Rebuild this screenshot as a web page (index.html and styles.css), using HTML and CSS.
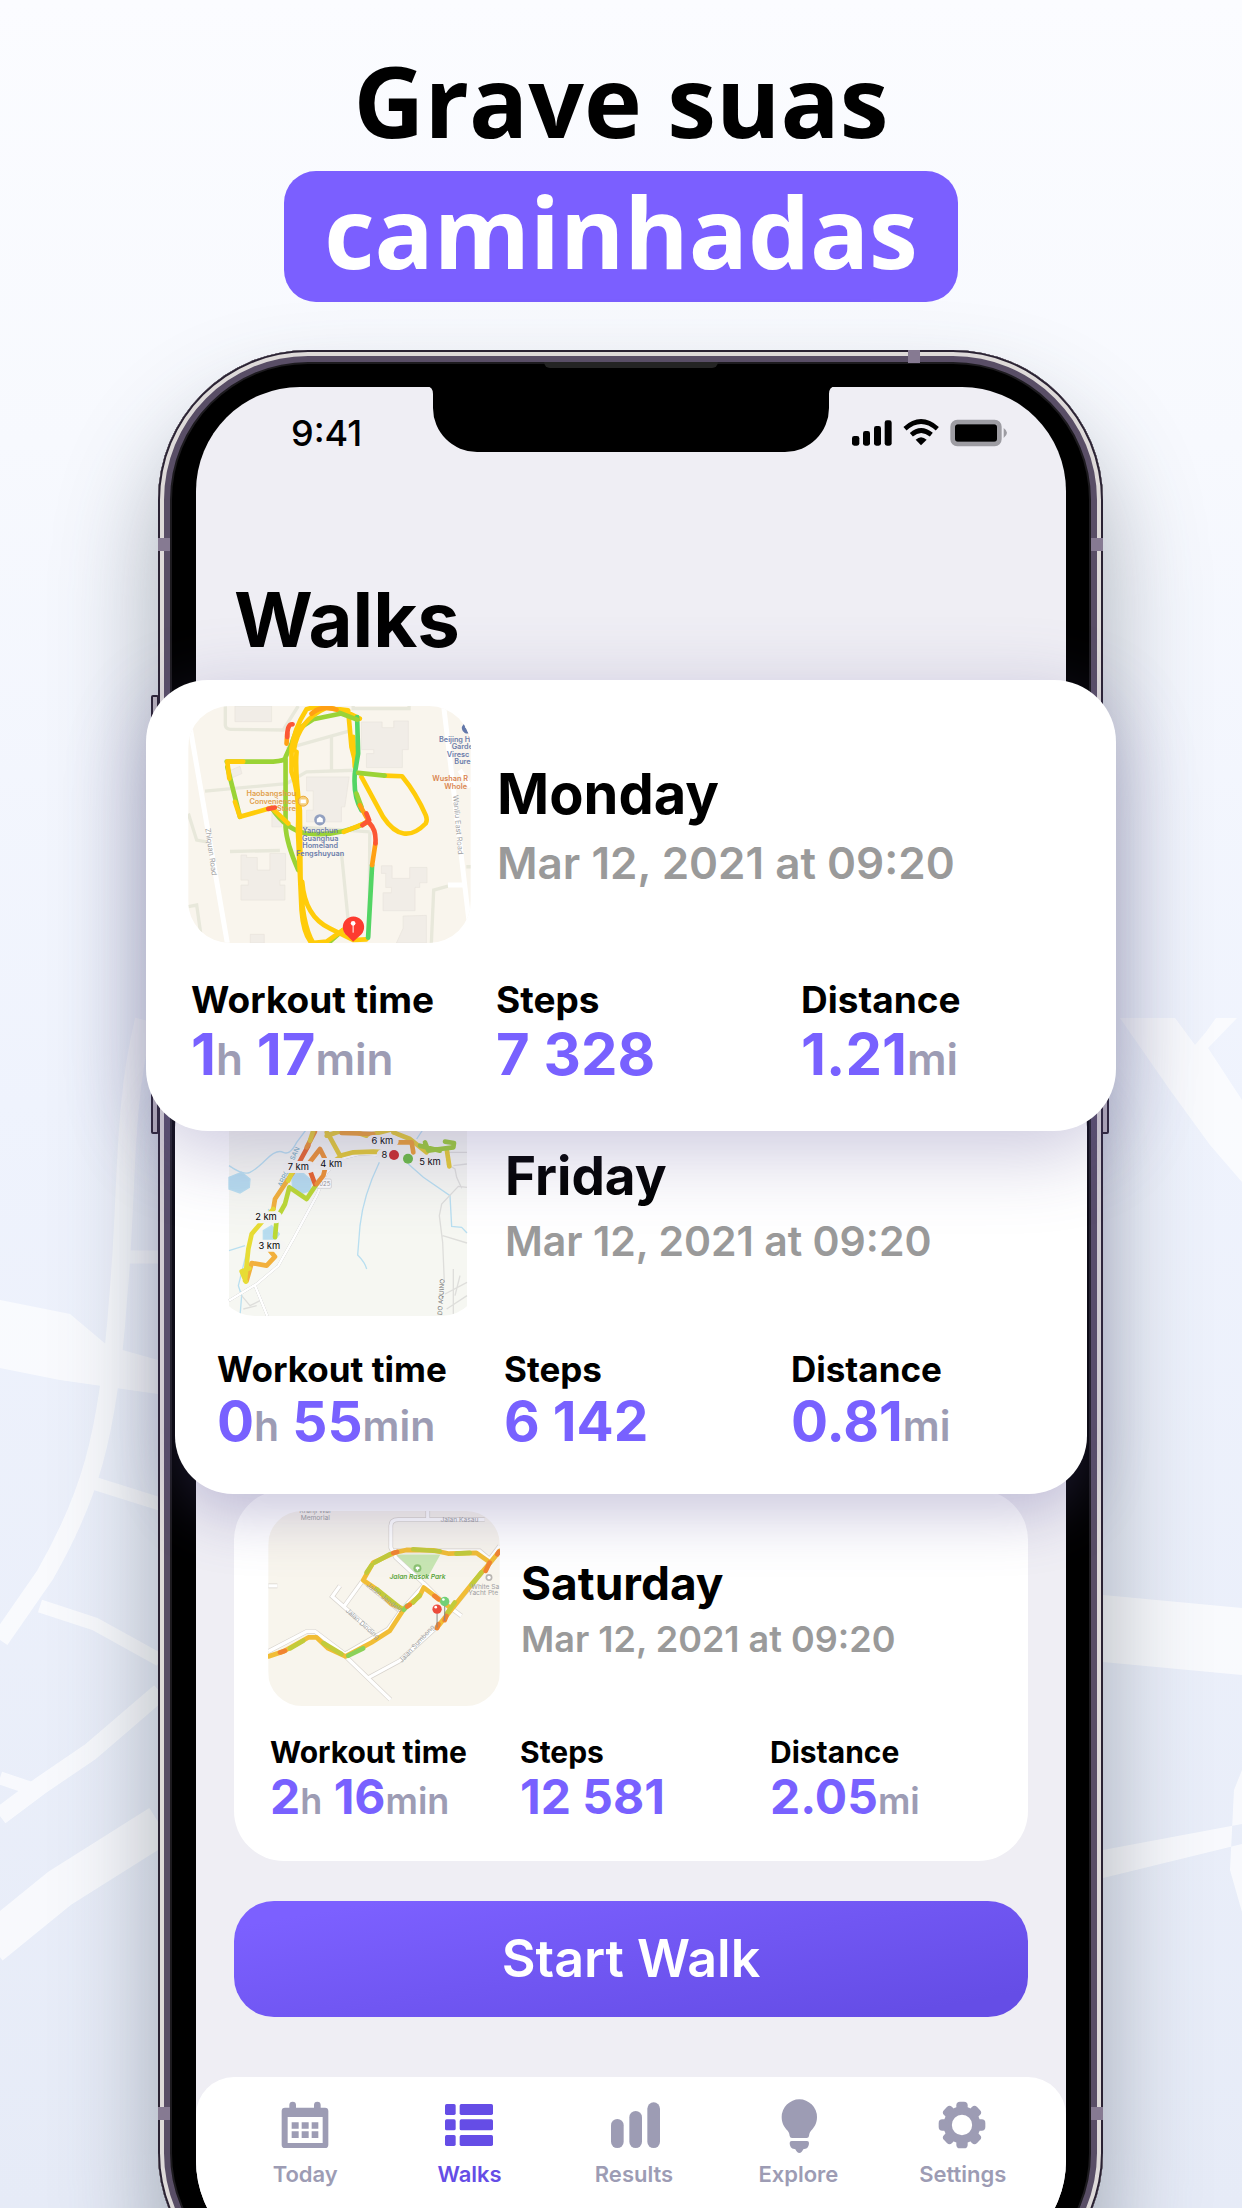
FILE: index.html
```html
<!DOCTYPE html>
<html lang="pt">
<head>
    <meta charset="UTF-8">
    <meta name="viewport" content="width=device-width, initial-scale=1">
    <title>Grave suas caminhadas</title>
    <link rel="stylesheet" href="styles.css">
</head>
<body>
<svg class="roads" viewBox="0 0 1242 2208" preserveAspectRatio="none" aria-hidden="true">
    <path class="fill" d="M0 1300L70 1314 108 1346 158 1360V1394L60 1380 0 1368zM1120 1018H1175L1195 1045 1206 1032 1216 1018H1237L1208 1048 1242 1100V1182L1210 1145 1170 1090zM1103 1595L1242 1608V1675L1103 1662zM1103 1850L1242 1824V1844L1103 1878zM1242 1770L1234 1790 1230 1870 1242 1912z"/>
    <path d="M144 1020C122 1110 128 1190 118 1300 108 1440 88 1500 45 1575L0 1640" stroke-width="18"/>
    <path d="M120 1257H160M90 1482L160 1504M40 1606L95 1624 160 1660M0 1778L30 1788" stroke-width="13"/>
    <path d="M0 1816L40 1786 90 1752 160 1692" stroke-width="18"/>
    <path d="M-10 1945L60 1888 160 1825" stroke-width="40"/>
</svg>

<header class="headline">
    <h1>Grave suas <span>caminhadas</span></h1>
</header>

<main class="stage">
    <div class="phone">
        <i class="key key-l1"></i>
        <i class="key key-l2"></i>
        <i class="key key-r"></i>
        <i class="band band-top"></i>
        <i class="band band-l"></i>
        <i class="band band-r"></i>
        <i class="band band-l low"></i>
        <i class="band band-r low"></i>
        <i class="speaker"></i>
        <div class="screen">
            <svg class="notch" viewBox="0 0 408 66" aria-hidden="true">
                <path d="M0 0Q6 1 6 8V22A44 44 0 0 0 50 66H358A44 44 0 0 0 402 22V8Q402 1 408 0z"/>
            </svg>
            <div class="status">
                <span>9:41</span>
                <svg class="status-icons" viewBox="636 264 465 84" aria-hidden="true">
                    <rect x="636" y="315" width="22" height="29" rx="7"/>
                    <rect x="669" y="300" width="21" height="44" rx="7"/>
                    <rect x="702" y="285" width="21" height="59" rx="7"/>
                    <rect x="734" y="268" width="21" height="76" rx="7"/>
                    <path d="M843 343L827 326Q843 311 860 326z"/>
                    <path class="wave" d="M795 293Q843 250 892 293M814 311Q843 286 874 311"/>
                    <rect class="shell" x="938" y="273" width="140" height="66" rx="14"/>
                    <rect x="945" y="280" width="126" height="52" rx="8"/>
                    <path class="nub" d="M1091 291Q1111 305 1091 321z"/>
                </svg>
            </div>
            <h2 class="title">Walks</h2>

            <article class="card card-lg">
                <div class="head">
                    <div class="map">
                        <svg viewBox="145 107 848 712" role="img" aria-label="Monday route">
                            <rect class="land" x="145" y="107" width="848" height="712"/>
                            <g class="lane">
                                <path d="M256 107V165Q258 177 272 177L430 179 475 107M440 235L630 182M575 195V305M195 363L440 340 500 305 645 300M640 107V115H808V107M270 544L420 541M605 550L625 750M690 485L688 800M470 470L690 485M145 430L170 510 200 515M145 710L170 705 182 790M875 819L882 660 925 648M980 590H993"/>
                            </g>
                            <g class="block">
                                <path d="M285 107H395V154H285zM665 155H727V172H762V152H806V238H788V250H788V292H680V250H702V238H665zM500 320H628L615 410H605V455H500V420H520V362H500zM303 555H320V562H352V600H390V550H437V630H420V645H435V690H303V645H325V630H303zM725 587H757V625H810V592H862V638H840V652H826V722H730V668H755V652H738V610H725zM790 738L860 736V819H770L790 775zM331 793H373V819H331zM272 300L300 288 306 310 278 322zM396 430H425V470H396z"/>
                            </g>
                            <g class="street">
                                <path d="M150 170L262 819M912 107L990 770M960 300L993 350M925 645H970"/>
                            </g>
                            <g class="label">
                                <text transform="translate(196 475) rotate(82)" font-size="22">Zhiquan Road</text>
                                <text transform="translate(940 375) rotate(85)" font-size="22">Wanliu East Road</text>
                            </g>
                            <g class="route">
                                <path stroke="#9ad336" d="M260 274H400Q437 272 437 260L455 220 470 180 520 147 612 128M437 265V470Q440 520 475 600M262 290L300 440M395 413Q440 480 500 490 600 500 685 455M610 780L570 815"/>
                                <path stroke="#ffcc0a" d="M310 274H262L268 325M285 395L300 440 395 413 445 460M612 485L685 455M455 240Q460 180 500 117L540 105 620 125 660 145M462 240Q475 150 560 112L625 120 635 230 645 270M455 230V305Q480 370 474 480L485 720Q490 790 515 819L560 815 610 780M470 245Q465 300 480 420L482 620Q485 760 520 819M487 635Q495 740 570 775L640 810 680 808M665 320L730 440Q790 530 858 460 864 450 858 435 830 370 787 318L735 316M640 200L645 290"/>
                                <path stroke="#53d564" d="M652 140L655 250 645 310Q640 380 665 420M697 585L685 803"/>
                                <path stroke="#9ad336" d="M600 128L652 148M655 308L735 316M650 370L665 410"/>
                                <path stroke="#ffa014" d="M660 405L685 450M707 520L697 585M515 130Q545 103 590 118M440 220L442 190"/>
                                <path stroke="#fc5735" d="M442 200Q442 160 458 162M680 430L688 450 668 465M690 460Q710 480 707 520M385 416L405 412"/>
                            </g>
                            <g class="place" text-anchor="middle" font-size="22">
                                <circle cx="540" cy="449" r="17" fill="#92a0c0"/>
                                <path d="M531 456V446L540 439 549 446V456z" fill="#fff"/>
                                <text x="541" y="490">Yangchun</text>
                                <text x="541" y="513">Guanghua</text>
                                <text x="541" y="535">Homeland</text>
                                <text x="541" y="558">Fengshuyuan</text>
                            </g>
                            <g class="shop" text-anchor="end" font-size="22">
                                <circle cx="490" cy="393" r="15" fill="#f5cf7e" stroke="#e9a734" stroke-width="3"/>
                                <path d="M482 388H498V399H482z" fill="#fff"/>
                                <text x="468" y="378">Haobangshou</text>
                                <text x="468" y="402">Convenience</text>
                                <text x="468" y="423">Store</text>
                            </g>
                            <g class="place" font-size="22">
                                <path d="M985 158A16 16 0 1 0 990 188L984 184 982 174 976 172z" fill="#6378aa"/>
                                <text x="898" y="215">Beijing H</text>
                                <text x="936" y="237">Garde</text>
                                <text x="921" y="260">Viresc</text>
                                <text x="944" y="282">Bure</text>
                            </g>
                            <g class="shop dark" font-size="22">
                                <text x="878" y="333">Wushan R</text>
                                <text x="914" y="355">Whole</text>
                            </g>
                            <path d="M640 815L622 797A32 32 0 1 1 660 797z" fill="#fd3b30"/>
                            <circle cx="640" cy="760" r="7" fill="#fff"/>
                            <path d="M640 760V788" stroke="#fff" stroke-width="3"/>
                        </svg>
                    </div>
                    <div class="when">
                        <h3>Monday</h3>
                        <time datetime="2021-03-12T09:20">Mar 12, 2021 at 09:20</time>
                    </div>
                </div>
                <dl class="stats">
                    <div><dt>Workout time</dt><dd>1<small>h</small> 17<small>min</small></dd></div>
                    <div><dt>Steps</dt><dd>7 328</dd></div>
                    <div><dt>Distance</dt><dd>1.21<small>mi</small></dd></div>
                </dl>
            </article>

            <article class="card card-md">
                <div class="head">
                    <div class="map">
                        <svg viewBox="207 -48 714 669" role="img" aria-label="Friday route">
                            <rect x="207" y="-48" width="714" height="669" fill="#f6f7f2"/>
                            <g class="water">
                                <path d="M207 170Q250 200 270 190T320 150 370 130 410 100L440 60M207 425L255 410M325 300L350 350M240 621L245 560 235 530 250 470 260 430M658 160Q610 260 600 350L593 438Q615 460 620 480M745 165L790 205 870 260 875 352 905 355 921 372M770 90L790 60"/>
                                <path class="pond" d="M207 205L245 190 270 210 268 235 240 252 207 240zM395 200L425 188 455 215 450 245 420 255 398 240zM310 365L335 350 358 375 340 400H310z"/>
                            </g>
                            <g class="lane thin">
                                <path d="M921 235L895 232 845 285 838 320 848 400 853 520M848 380L921 402M860 165L885 180 890 205 905 238M880 480V621M855 555L921 520M860 600L921 560M900 500L885 560M245 560L270 590 300 575M250 600L290 590M860 130H921M880 170L921 165"/>
                            </g>
                            <g class="street narrow">
                                <path d="M207 575L290 525 355 470 400 390 470 260 500 190 540 150 600 135 700 140M285 530L322 621"/>
                            </g>
                            <rect x="470" y="210" width="44" height="28" rx="4" fill="#fff" stroke="#ccc" stroke-width="2"/>
                            <text x="478" y="231" font-size="18" fill="#999">025</text>
                            <text transform="translate(365 235) rotate(-65)" font-size="20" fill="#6da6bd">ARROYO SAN</text>
                            <text transform="translate(846 619) rotate(-86)" font-size="19" fill="#777">DO AQUINO</text>
                            <g class="route slim">
                                <path stroke="#f2b03c" d="M260 515L275 462 320 470 345 443 330 425M340 300L345 270 385 210 410 175"/>
                                <path stroke="#e7dc35" d="M258 518L245 487 268 478M255 515L265 420 275 375 305 340 340 300M385 215L400 180"/>
                                <path stroke="#bcd936" d="M345 385L350 330 375 285 388 235 440 270 470 225"/>
                                <path stroke="#e9662f" d="M415 165L445 110M465 225L450 185"/>
                                <path stroke="#ef9334" d="M440 115L465 68M445 165L480 120 500 160 490 200 470 225"/>
                                <path stroke="#e7cd35" d="M450 95L468 40M500 70L510 85 540 140 580 130 640 128 690 130M500 80L560 60 620 80 700 60M700 70L750 90 800 130M860 120L868 172M500 170L540 145"/>
                                <path stroke="#efa133" d="M545 72L640 75M700 100L755 100 760 130"/>
                                <path stroke="#9fce38" d="M795 100L805 125 840 120 880 115 882 102 855 98M780 110L840 125"/>
                            </g>
                            <g class="tag" text-anchor="middle" font-size="28">
                                <rect x="367" y="156" width="98" height="36" rx="18"/><text x="415" y="184">7 km</text>
                                <rect x="467" y="147" width="95" height="36" rx="18"/><text x="514" y="175">4 km</text>
                                <rect x="620" y="78" width="96" height="36" rx="18"/><text x="667" y="106">6 km</text>
                                <rect x="650" y="120" width="80" height="34" rx="17"/><text x="673" y="147">8</text>
                                <rect x="764" y="139" width="94" height="36" rx="18"/><text x="810" y="167">5 km</text>
                                <rect x="269" y="307" width="98" height="36" rx="18"/><text x="318" y="334">2 km</text>
                                <rect x="281" y="392" width="97" height="36" rx="18"/><text x="328" y="419">3 km</text>
                            </g>
                            <circle cx="702" cy="138" r="15" fill="#ce2d2b"/>
                            <circle cx="744" cy="149" r="15" fill="#6dbd44"/>
                        </svg>
                    </div>
                    <div class="when">
                        <h3>Friday</h3>
                        <time datetime="2021-03-12T09:20">Mar 12, 2021 at 09:20</time>
                    </div>
                </div>
                <dl class="stats">
                    <div><dt>Workout time</dt><dd>0<small>h</small> 55<small>min</small></dd></div>
                    <div><dt>Steps</dt><dd>6 142</dd></div>
                    <div><dt>Distance</dt><dd>0.81<small>mi</small></dd></div>
                </dl>
            </article>

            <article class="card card-sm">
                <div class="head">
                    <div class="map">
                        <svg viewBox="205 95 695 586" role="img" aria-label="Saturday route">
                            <rect x="205" y="95" width="695" height="586" fill="#f8f5ed"/>
                            <path d="M588 226H722L685 292 640 285z" fill="#c8e6b3"/>
                            <g class="road-edge">
                                <path d="M684 95V122M855 121H595Q573 121 573 140V205L588 235 680 320M580 215H840L870 240 900 200M205 517L320 457H345L435 525 565 450 600 400 675 315 735 375M435 530L572 662M502 598L600 545 715 440 900 215M488 305L430 385M420 320L397 352 520 460M745 380L785 410M205 320H232M490 305L600 395"/>
                            </g>
                            <g class="road">
                                <path d="M684 95V122M855 121H595Q573 121 573 140V205L588 235 680 320M580 215H840L870 240 900 200M205 517L320 457H345L435 525 565 450 600 400 675 315 735 375M435 530L572 662M502 598L600 545 715 440 900 215M488 305L430 385M420 320L397 352 520 460M745 380L785 410M205 320H232M490 305L600 395"/>
                            </g>
                            <g class="route">
                                <path stroke="#f1bd36" d="M205 532L250 517 325 475H350L385 508 437 532 515 490 570 455 612 390 575 375 530 330 490 303 520 250 585 220 620 212 700 213 745 223 830 221 872 250 900 215M612 390L660 350 672 325 712 355 750 385M872 250L820 310 712 445"/>
                                <path stroke="#c2cb3b" d="M270 508L310 485M370 492L425 525M525 250L570 225M640 210L720 216M770 223L810 221M530 330L600 385M845 280L815 318M500 280L515 258M740 405L765 370M640 370L660 348"/>
                                <path stroke="#8bd159" d="M445 530L490 508M612 392L622 380"/>
                                <path stroke="#f18432" d="M712 447L716 435M870 250L858 275M893 225L898 217M622 382L630 377M704 350L716 360M735 423L740 410M580 221L592 218M240 520L255 515"/>
                            </g>
                            <g class="label" font-size="20">
                                <text x="298" y="101">Kranji War</text>
                                <text x="302" y="122">Memorial</text>
                                <text x="722" y="129">Jalan Kasau</text>
                                <text x="815" y="328">White Sa</text>
                                <text x="806" y="348">Yacht Pte</text>
                                <text transform="translate(498 320) rotate(38)">Jalan Jendela</text>
                                <text transform="translate(436 396) rotate(42)">Jalan Dinding</text>
                                <text transform="translate(606 552) rotate(-47)">Jalan Sumbong</text>
                            </g>
                            <text class="park" x="569" y="300" font-size="20">Jalan Rasok Park</text>
                            <circle cx="653" cy="267" r="12" fill="#8bc272"/>
                            <path d="M647 268A6 6 0 1 1 660 268L655 270V274H651V270z" fill="#fff"/>
                            <circle cx="868" cy="295" r="8" fill="#fff" stroke="#b9b6b2" stroke-width="5"/>
                            <path d="M712 400V445M735 375V425" stroke="#888" stroke-width="3"/>
                            <circle cx="712" cy="390" r="14" fill="#ec4b3c"/>
                            <circle cx="735" cy="367" r="14" fill="#72d077"/>
                            <circle cx="708" cy="384" r="4" fill="#fff"/>
                            <circle cx="731" cy="361" r="4" fill="#fff"/>
                        </svg>
                    </div>
                    <div class="when">
                        <h3>Saturday</h3>
                        <time datetime="2021-03-12T09:20">Mar 12, 2021 at 09:20</time>
                    </div>
                </div>
                <dl class="stats">
                    <div><dt>Workout time</dt><dd>2<small>h</small> 16<small>min</small></dd></div>
                    <div><dt>Steps</dt><dd>12 581</dd></div>
                    <div><dt>Distance</dt><dd>2.05<small>mi</small></dd></div>
                </dl>
            </article>

            <button class="start" type="button">Start Walk</button>

            <nav class="tabs">
                <a href="#today">
                    <svg viewBox="292 120 168 162" aria-hidden="true">
                        <path fill-rule="evenodd" d="M329 146V138A10 10 0 0 1 349 138V146H403V138A10 10 0 0 1 423 138V146H436Q446 146 446 156V257Q446 267 436 267H316Q306 267 306 257V156Q306 146 316 146zM324 174V252H429V174z"/>
                        <path d="M336 190H357V209H336zM366 190H387V209H366zM396 190H416V209H396zM336 217H357V237H336zM366 217H387V237H366zM396 217H416V237H396z"/>
                    </svg>
                    Today
                </a>
                <a class="active" href="#walks">
                    <svg viewBox="784 120 168 162" aria-hidden="true">
                        <rect x="793" y="135" width="32" height="33" rx="5"/><rect x="837" y="135" width="100" height="33" rx="5"/>
                        <rect x="793" y="181" width="32" height="33" rx="5"/><rect x="837" y="181" width="100" height="33" rx="5"/>
                        <rect x="793" y="228" width="32" height="33" rx="5"/><rect x="837" y="228" width="100" height="33" rx="5"/>
                    </svg>
                    Walks
                </a>
                <a href="#results">
                    <svg viewBox="-42 120 168 162" aria-hidden="true">
                        <rect x="-27" y="180" width="38" height="87" rx="19"/>
                        <rect x="28" y="156" width="38" height="111" rx="19"/>
                        <rect x="82" y="130" width="38" height="137" rx="19"/>
                    </svg>
                    Results
                </a>
                <a href="#explore">
                    <svg viewBox="453 120 168 162" aria-hidden="true">
                        <path d="M541 121A53 53 0 0 1 594 174C594 193 586 205 576 215 571 221 571 225 570 231Q569 237 563 237H519Q513 237 512 231C511 225 511 221 506 215 496 205 488 193 488 174A53 53 0 0 1 541 121z"/>
                        <path d="M518 246H564Q570 246 570 252 570 269 556 270L553 271Q548 282 541 282T529 271L526 270Q512 269 512 252 512 246 518 246z"/>
                    </svg>
                    Explore
                </a>
                <a href="#settings">
                    <svg viewBox="943 120 168 162" aria-hidden="true">
                        <circle cx="1024" cy="198" r="43" fill="none" stroke="currentColor" stroke-width="25"/>
                        <g id="teeth">
                            <rect x="1007" y="128" width="34" height="30" rx="11"/>
                            <rect x="1007" y="238" width="34" height="30" rx="11"/>
                            <rect x="954" y="181" width="30" height="34" rx="11"/>
                            <rect x="1064" y="181" width="30" height="34" rx="11"/>
                        </g>
                        <use href="#teeth" transform="rotate(45 1024 198)"/>
                    </svg>
                    Settings
                </a>
            </nav>
        </div>
    </div>
</main>
</body>
</html>
```

FILE: styles.css
```css
*{
    margin: 0;
    padding: 0;
    box-sizing: border-box;
}
body{
    position: relative;
    height: 100vh;
    overflow: hidden;
    background: linear-gradient(#fbfcff 0%, #f7f9fe 20%, #eff3fd 50%, #e6ebf7 100%);
    font-family: Inter, "Liberation Sans", sans-serif;
    color: #000;
}
.roads{
    position: absolute;
    left: 0;
    top: 0;
    width: 100%;
    height: 100%;
    fill: none;
    stroke: #fff;
    opacity: .7;
}
.roads .fill{
    fill: #fff;
    stroke: none;
}

/* headline */
.headline{
    position: relative;
    padding-top: 43px;
    text-align: center;
}
.headline h1{
    display: flex;
    flex-direction: column;
    align-items: center;
    gap: 14px;
    font: 700 98px/114px "Open Sans", sans-serif;
}
.headline span{
    padding: 0 40px 11px;
    border-radius: 32px;
    background: #7b5fff;
    color: #fff;
    line-height: 120px;
}

/* phone */
.stage{
    padding: 48px 139px 0 158px;
}
.phone{
    position: relative;
    padding: 37px 37px 38px 38px;
    border-radius: 150px;
    background: #000;
    box-shadow: inset 0 0 0 2px #2a2233, inset 0 0 0 6px #dedad9, inset 0 0 0 12px #594e66, inset 0 0 0 14px #1d1b1f, 0 60px 100px rgba(60, 70, 80, .42);
}
.key{
    position: absolute;
    left: -7px;
    width: 8px;
    border: 2px solid #2a2233;
    background: #b9b2bc;
    border-radius: 2px;
}
.key-l1{
    top: 345px;
    height: 160px;
}
.key-l2{
    top: 620px;
    height: 164px;
}
.key-r{
    top: 520px;
    left: auto;
    right: -6px;
    height: 264px;
}
.band{
    position: absolute;
    width: 12px;
    height: 13px;
    background: #867a92;
}
.band-l{
    left: 0;
    top: 188px;
}
.band-r{
    right: 0;
    top: 188px;
}
.band-top{
    top: 0;
    right: 183px;
}
.low{
    top: 1757px;
}
.speaker{
    position: absolute;
    top: 12px;
    left: 50%;
    width: 174px;
    height: 6px;
    margin-left: -87px;
    border-radius: 0 0 6px 6px;
    background: #242424;
}
.screen{
    position: relative;
    padding: 0 38px;
    border-radius: 104px;
    background: #efeef4;
}
.notch{
    position: absolute;
    top: -1px;
    left: 50%;
    width: 408px;
    margin-left: -204px;
}
.status{
    display: flex;
    align-items: center;
    justify-content: space-between;
    height: 92px;
    padding: 0 21px 0 57px;
    font-size: 36px;
    font-weight: 500;
}
.status-icons{
    width: 155px;
    height: 28px;
}
.status-icons .wave{
    fill: none;
    stroke: #000;
    stroke-width: 14px;
}
.status-icons .shell{
    fill: none;
    stroke: #9d9ca2;
    stroke-width: 14px;
}
.status-icons .nub{
    fill: #9d9ca2;
}
.title{
    margin: 94px 0 15px;
    font-size: 76px;
    line-height: 92px;
    font-weight: 700;
}

/* walk cards */
.card{
    position: relative;
    background: #fff;
}
.head{
    display: flex;
    align-items: center;
}
.map{
    flex: none;
    overflow: hidden;
}
.map svg{
    display: block;
    width: 100%;
    height: 100%;
}
.when h3{
    font-weight: 700;
}
.when time{
    display: block;
    font-weight: 600;
    color: #9a9a9a;
    white-space: nowrap;
}
.stats{
    display: grid;
    grid-template-columns: repeat(3, 1fr);
}
.stats dt{
    font-weight: 700;
    white-space: nowrap;
}
.stats dd{
    font-weight: 700;
    color: #7861ff;
    white-space: nowrap;
}
.stats small{
    color: #9d9cb4;
    font-weight: 600;
    line-height: 1;
}
.card-lg{
    z-index: 3;
    margin: 0 -88px;
    padding: 26px 0 46px;
    border-radius: 62px;
    box-shadow: 0 20px 80px rgba(90, 80, 150, .32);
}
.card-lg .head{
    gap: 26px;
    padding-left: 42px;
}
.card-lg .map{
    width: 283px;
    height: 237px;
    border-radius: 42px;
}
.card-lg h3{
    font-size: 56px;
    line-height: 76px;
}
.card-lg time{
    font-size: 44px;
    line-height: 62px;
}
.card-lg .stats{
    padding: 33px 10px 0 45px;
}
.card-lg dt{
    font-size: 37px;
    line-height: 48px;
}
.card-lg dd{
    font-size: 58px;
    line-height: 61px;
}
.card-lg small{
    font-size: 44px;
}
.card-md{
    z-index: 2;
    margin: -62px -59px 0;
    padding: 24px 0 44px;
    border-radius: 58px;
    box-shadow: 0 20px 60px rgba(90, 80, 150, .32);
}
.card-md .head{
    gap: 24px;
    padding-left: 40px;
}
.card-md .map{
    width: 266px;
    height: 223px;
    border-radius: 40px;
}
.card-md h3{
    font-size: 53px;
    line-height: 72px;
}
.card-md time{
    font-size: 41px;
    line-height: 58px;
}
.card-md .stats{
    padding: 31px 9px 0 42px;
}
.card-md dt{
    font-size: 35px;
    line-height: 45px;
}
.card-md dd{
    font-size: 55px;
    line-height: 58px;
}
.card-md small{
    font-size: 41px;
}
.card-sm{
    z-index: 1;
    margin-top: -4px;
    padding: 21px 0 39px;
    border-radius: 50px;
}
.card-sm .head{
    gap: 21px;
    padding-left: 34px;
}
.card-sm .map{
    width: 232px;
    height: 195px;
    border-radius: 34px;
}
.card-sm h3{
    font-size: 46px;
    line-height: 62px;
}
.card-sm time{
    font-size: 36px;
    line-height: 51px;
}
.card-sm .stats{
    padding: 26px 8px 0 36px;
}
.card-sm dt{
    font-size: 30px;
    line-height: 40px;
}
.card-sm dd{
    font-size: 48px;
    line-height: 50px;
}
.card-sm small{
    font-size: 36px;
}

/* map drawing */
.land{
    fill: #f9f5ed;
}
.lane{
    fill: none;
    stroke: #e8e8db;
    stroke-width: 10px;
}
.lane.thin{
    stroke: #dededb;
    stroke-width: 4px;
}
.block{
    fill: #f1ede7;
    stroke: #e8e4dd;
    stroke-width: 2px;
}
.street{
    fill: none;
    stroke: #fff;
    stroke-width: 15px;
}
.street.narrow{
    stroke-width: 8px;
    filter: drop-shadow(0 0 1px #aaa);
}
.water{
    fill: none;
    stroke: #b9dff0;
    stroke-width: 4px;
}
.water .pond{
    fill: #b7dcef;
}
.road-edge{
    fill: none;
    stroke: #d8d4ce;
    stroke-width: 14px;
}
.road{
    fill: none;
    stroke: #fff;
    stroke-width: 10px;
}
.route{
    fill: none;
    stroke-width: 14px;
    stroke-linecap: round;
    stroke-linejoin: round;
}
.label{
    fill: #a09fa2;
}
.place{
    fill: #6c7dab;
    font-weight: 600;
}
.shop{
    fill: #e1a04b;
    font-weight: 600;
}
.shop.dark{
    fill: #d98550;
}
.tag rect{
    fill: #f5f5f3;
}
.park{
    fill: #5ba53c;
    font-weight: 600;
    font-style: italic;
}

.start{
    display: block;
    width: 100%;
    height: 116px;
    margin-top: 40px;
    border: 0;
    border-radius: 40px;
    background: linear-gradient(170deg, #7c60ff 10%, #654de6 90%);
    color: #fff;
    font: 600 52px/60px Inter, sans-serif;
    cursor: pointer;
}
.tabs{
    display: grid;
    grid-template-columns: repeat(5, 1fr);
    height: 188px;
    margin: 60px -38px 0;
    padding: 22px 21px 0 27px;
    border-radius: 38px 38px 104px 104px;
    background: #fff;
}
.tabs a{
    display: flex;
    flex-direction: column;
    align-items: center;
    gap: 7px;
    color: #9d9cb4;
    fill: currentColor;
    font-size: 22px;
    line-height: 28px;
    font-weight: 600;
    text-decoration: none;
}
.tabs svg{
    width: 56px;
    height: 54px;
}
.tabs .active{
    color: #654de6;
}
```
